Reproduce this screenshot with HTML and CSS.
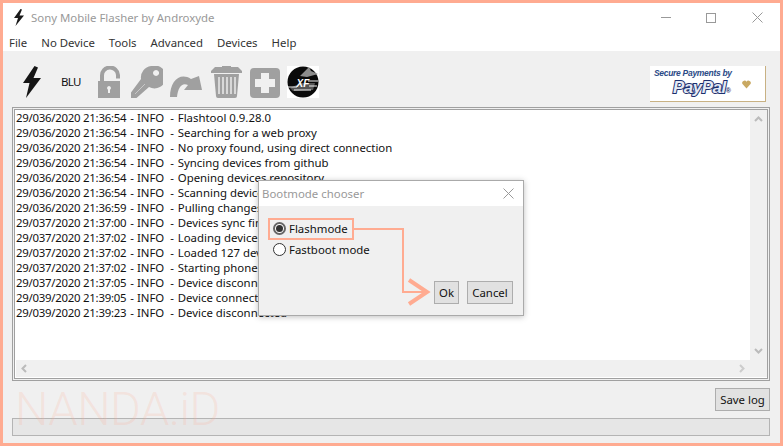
FILE: index.html
```html
<!DOCTYPE html>
<html lang="en">
<head>
<meta charset="utf-8">
<title>Sony Mobile Flasher by Androxyde</title>
<link rel="stylesheet" href="styles.css">
</head>
<body>
<div class="window">
  <header class="titlebar">
    <svg class="app-icon" width="12" height="17" viewBox="0 0 12 17"><path d="M7.500 0 L1 9 L5 9 L2.500 17 L11 6.500 L6.500 6.500 L9 0.500 Z" fill="#1a1a1a"/></svg>
    <span class="title">Sony Mobile Flasher by Androxyde</span>
    <div class="controls">
      <svg class="ctl-min" width="10" height="1" viewBox="0 0 10 1"><rect width="10" height="1" fill="#999"/></svg>
      <svg class="ctl-max" width="10" height="10" viewBox="0 0 10 10"><rect x=".5" y=".5" width="9" height="9" fill="none" stroke="#999"/></svg>
      <svg class="ctl-close" width="11" height="11" viewBox="0 0 11 11"><path d="M.5 .5 L10.500 10.500 M10.500 .5 L.5 10.500" stroke="#999" fill="none"/></svg>
    </div>
  </header>
  <nav class="menubar">
    <span>File</span><span>No Device</span><span>Tools</span><span>Advanced</span><span>Devices</span><span>Help</span>
  </nav>
  <main class="content">
    <div class="toolbar">
      <div class="tools">
        <svg class="tool bolt" width="20" height="32" viewBox="0 0 20 32"><path d="M12.500 0 L1 17 L7.500 17 L4 32 L19 12 L11.500 12 L16 1.500 Z" fill="#151515"/></svg>
        <span class="blu">BLU</span>
        <svg class="tool lock" width="22" height="32" viewBox="0 0 22 32"><path d="M4 15 V10 A8 8 0 0 1 20 9 V12.500" fill="none" stroke="#a0a0a0" stroke-width="4"/><path d="M0 15 H22 V32 H0 Z M11 20 a2 2 0 0 0 -1 3.700 V27 h2 V23.700 A2 2 0 0 0 11 20 Z" fill="#a0a0a0" fill-rule="evenodd"/></svg>
        <svg class="tool key" width="32" height="32" viewBox="0 0 32 32"><path d="M20 0 A11.500 11.500 0 1 1 18 21 L5.500 32 L0 32 L0 26.500 L10 13 A11.500 11.500 0 0 1 20 0 Z M25 4 a3 3 0 1 0 .1 0 Z" fill="#a0a0a0" fill-rule="evenodd"/><path d="M4 28 L14 18" stroke="#c8c8c8" fill="none"/></svg>
        <svg class="tool arrow" width="32" height="25" viewBox="0 0 32 25"><path d="M0 25 C0 9 10 0 21 7 L29 4 L32 18 L14 18 L18 13 C12 10 8 15 7 25 Z" fill="#a0a0a0"/></svg>
        <svg class="tool trash" width="31" height="32" viewBox="0 0 31 32"><path d="M4 1 L11 1 V0 H20 V1 L27 1 L31 5 V7 H0 V5 Z" fill="#a0a0a0"/><path d="M3 8 H28 L26 30 Q26 32 24 32 H7 Q5 32 5 30 Z" fill="#a0a0a0"/><path d="M7 11 H9 V28 H7 Z M11 11 H13 V28 H11 Z M15 11 H17 V28 H15 Z M19 11 H21 V28 H19 Z M23 11 H25 V28 H23 Z" fill="#d8d8d8"/></svg>
        <svg class="tool plus" width="30" height="30" viewBox="0 0 30 30"><path d="M4 0 H26 Q30 0 30 4 V26 Q30 30 26 30 H4 Q0 30 0 26 V4 Q0 0 4 0 Z M11 5 V11 H5 V19 H11 V25 H19 V19 H25 V11 H19 V5 Z" fill="#a0a0a0" fill-rule="evenodd"/></svg>
        <svg class="tool xf" width="32" height="32" viewBox="0 0 32 32"><rect width="32" height="32" fill="#fff"/><circle cx="16" cy="16" r="15.500" fill="#0a0a0a"/><path d="M13 10 L22 1 L24 5 L31 8 L20 11 Z" fill="#8c8c8c"/><path d="M3 22 L14 17 L28 17 L26 24 L6 25 Z" fill="#555"/><path d="M1 21 H10 M21 15 H31 M22 20 H30 M7 24 H24" stroke="#eee" stroke-width="1"/><text x="16" y="21" class="xf-text">XF</text></svg>
      </div>
      <div class="paypal">
        <span class="pp-secure">Secure Payments by</span>
        <span class="pp-row"><span class="pp-name">PayPal</span><span class="pp-reg">®</span>
          <svg class="pp-heart" width="9" height="9" viewBox="0 0 9 9"><path d="M4.500 8.500 L.5 4 A2.200 2.200 0 0 1 4.500 1.800 A2.200 2.200 0 0 1 8.500 4 Z" fill="#c9a962"/></svg>
        </span>
      </div>
    </div>
    <section class="logbox">
      <div class="loginner">
        <div class="logrow">
          <div class="log">
            <div class="line"><span class="ts">29/036/2020 21:36:54</span> <span class="lvl">- INFO  -</span> Flashtool 0.9.28.0</div>
            <div class="line"><span class="ts">29/036/2020 21:36:54</span> <span class="lvl">- INFO  -</span> Searching for a web proxy</div>
            <div class="line"><span class="ts">29/036/2020 21:36:54</span> <span class="lvl">- INFO  -</span> No proxy found, using direct connection</div>
            <div class="line"><span class="ts">29/036/2020 21:36:54</span> <span class="lvl">- INFO  -</span> Syncing devices from github</div>
            <div class="line"><span class="ts">29/036/2020 21:36:54</span> <span class="lvl">- INFO  -</span> Opening devices repository</div>
            <div class="line"><span class="ts">29/036/2020 21:36:54</span> <span class="lvl">- INFO  -</span> Scanning devices folder</div>
            <div class="line"><span class="ts">29/036/2020 21:36:59</span> <span class="lvl">- INFO  -</span> Pulling changes from github</div>
            <div class="line"><span class="ts">29/037/2020 21:37:00</span> <span class="lvl">- INFO  -</span> Devices sync finished</div>
            <div class="line"><span class="ts">29/037/2020 21:37:02</span> <span class="lvl">- INFO  -</span> Loading devices database</div>
            <div class="line"><span class="ts">29/037/2020 21:37:02</span> <span class="lvl">- INFO  -</span> Loaded 127 devices</div>
            <div class="line"><span class="ts">29/037/2020 21:37:02</span> <span class="lvl">- INFO  -</span> Starting phone detection</div>
            <div class="line"><span class="ts">29/037/2020 21:37:05</span> <span class="lvl">- INFO  -</span> Device disconnected</div>
            <div class="line"><span class="ts">29/039/2020 21:39:05</span> <span class="lvl">- INFO  -</span> Device connected</div>
            <div class="line"><span class="ts">29/039/2020 21:39:23</span> <span class="lvl">- INFO  -</span> Device disconnected</div>
          </div>
          <div class="vscroll">
            <svg width="9" height="6" viewBox="0 0 9 6"><path d="M1 5 L4.500 1.500 L8 5" fill="none" stroke="#bbb" stroke-width="2"/></svg>
            <svg width="9" height="6" viewBox="0 0 9 6"><path d="M1 1 L4.500 4.500 L8 1" fill="none" stroke="#bbb" stroke-width="2"/></svg>
          </div>
        </div>
        <div class="hscroll">
          <svg width="6" height="9" viewBox="0 0 6 9"><path d="M5 1 L1.500 4.500 L5 8" fill="none" stroke="#bbb" stroke-width="2"/></svg>
          <svg width="6" height="9" viewBox="0 0 6 9"><path d="M1 1 L4.500 4.500 L1 8" fill="none" stroke="#ccc" stroke-width="2"/></svg>
        </div>
      </div>
    </section>
    <div class="actions"><button class="btn save">Save log</button></div>
    <div class="progress"></div>
  </main>

  <div class="watermark">NANDA.iD</div>

  <div class="dialog">
    <div class="dlg-title">
      <span>Bootmode chooser</span>
      <svg width="11" height="11" viewBox="0 0 11 11"><path d="M.5 .5 L10.500 10.500 M10.500 .5 L.5 10.500" stroke="#999" fill="none"/></svg>
    </div>
    <div class="dlg-body">
      <label class="radio"><span class="dot on"></span>Flashmode</label>
      <label class="radio"><span class="dot"></span>Fastboot mode</label>
      <div class="dlg-actions">
        <button class="btn ok">Ok</button>
        <button class="btn cancel">Cancel</button>
      </div>
    </div>
  </div>

  <svg class="annotation" width="170" height="90" viewBox="0 0 170 90">
    <rect x="1" y="1" width="84" height="20" fill="none" stroke="#ffab91" stroke-width="2"/>
    <path d="M85 11 H135 V74 H158" fill="none" stroke="#ffab91" stroke-width="2"/>
    <path d="M141 62 L159 74 L141 86" fill="none" stroke="#ffab91" stroke-width="4"/>
  </svg>
</div>
</body>
</html>
```

FILE: styles.css
```css
* { box-sizing: border-box; }
html, body { margin: 0; height: 100%; }
body {
  width: 783px;
  height: 446px;
  overflow: hidden;
  font-family: "Noto Sans", "Open Sans", sans-serif;
  font-size: 11.4px;
  color: #111;
}
.window {
  position: relative;
  width: 783px;
  height: 446px;
  border: 3px solid #ffab91;
  display: flex;
  flex-direction: column;
  background: #f0f0f0;
}
.titlebar {
  height: 30px;
  background: #fff;
  display: flex;
  align-items: center;
  padding-left: 10px;
  flex: none;
}
.app-icon { margin-top: -2px; }
.title { margin-left: 6px; margin-top: -1px; color: #999; font-size: 11.4px; }
.controls {
  margin-left: auto;
  display: flex;
  align-items: center;
  padding-right: 17px;
  margin-top: -1px;
}
.ctl-max { margin-left: 35px; }
.ctl-close { margin-left: 36px; }
.menubar {
  height: 18px;
  background: #fff;
  display: flex;
  gap: 14px;
  padding-left: 6px;
  flex: none;
  color: #333;
  line-height: 19px;
}
.content {
  flex: 1;
  min-height: 0;
  display: flex;
  flex-direction: column;
  padding: 0 10px 0 9px;
}
.toolbar {
  height: 56px;
  display: flex;
  align-items: flex-start;
  justify-content: space-between;
  flex: none;
}
.tools { display: flex; align-items: flex-start; padding-top: 15px; }
.tool { display: block; flex: none; }
.bolt { margin-left: 10px; }
.blu { margin-left: 19px; margin-top: 8px; font-size: 11.5px; line-height: 16px; color: #111; letter-spacing: -.7px; width: 19px; white-space: nowrap; }
.lock { margin-left: 18px; }
.key { margin-left: 11px; }
.arrow { margin-left: 7px; margin-top: 6px; }
.trash { margin-left: 9px; }
.plus { margin-left: 8px; margin-top: 2px; }
.xf { margin-left: 7px; }
.xf-text { font-family: "Liberation Sans", sans-serif; font-size: 10px; font-style: italic; font-weight: 700; fill: #fff; text-anchor: middle; }
.paypal {
  width: 116px;
  height: 36px;
  margin-top: 15px;
  margin-right: 4px;
  background: #fff;
  border-right: 1px solid #c8b183;
  border-bottom: 1px solid #c8b183;
  padding: 3px 0 0 4px;
  display: flex;
  flex-direction: column;
  font-family: "Liberation Sans", sans-serif;
  line-height: 1;
}
.pp-secure { font-size: 8.500px; font-style: italic; font-weight: 700; color: #2b4a86; white-space: nowrap; letter-spacing: -.3px; }
.pp-row { display: flex; align-items: flex-end; padding-left: 19px; margin-top: 1px; }
.pp-name {
  font-size: 17px;
  font-style: italic;
  font-weight: 700;
  color: #e4e9f4;
  -webkit-text-stroke: 2px #1c2f6e;
  paint-order: stroke fill;
  letter-spacing: -.5px;
}
.pp-reg { font-size: 7px; font-weight: 700; color: #1c2f6e; margin-bottom: 2px; }
.pp-heart { margin-left: 11px; margin-bottom: 7px; flex: none; }
.logbox {
  height: 274px;
  border: 1px solid #a0a0a0;
  padding: 1px;
  flex: none;
}
.loginner {
  height: 100%;
  border: 1px solid #a0a0a0;
  background: #fff;
  display: flex;
  flex-direction: column;
  padding: 0 0 1px 0;
}
.logrow { flex: 1; min-height: 0; display: flex; padding-right: 0; }
.log {
  flex: 1;
  padding: 0 0 0 1px;
  overflow: hidden;
  color: #111;
}
.line { white-space: pre; line-height: 15px; height: 15px; }
.ts { letter-spacing: -.25px; margin-right: 1px; }
.lvl { margin-right: 1px; }
.vscroll {
  width: 17px;
  background: #f0f0f0;
  display: flex;
  flex-direction: column;
  justify-content: space-between;
  align-items: center;
  padding: 6px 0;
}
.hscroll {
  height: 17px;
  margin-left: 1px;
  background: #f0f0f0;
  display: flex;
  justify-content: space-between;
  align-items: center;
  padding: 0 22px 0 5px;
  flex: none;
}
.actions { display: flex; justify-content: flex-end; padding-top: 7px; height: 37px; flex: none; }
.btn {
  font: 11.4px "Noto Sans", "Open Sans", sans-serif;
  color: #111;
  background: #e1e1e1;
  border: 1px solid #adadad;
  padding: 0;
  height: 23px;
}
.save { width: 55px; }
.progress {
  height: 18px;
  background: #e6e6e6;
  border: 1px solid #b4b4b4;
  flex: none;
}
.watermark {
  position: absolute;
  left: 12px;
  top: 378px;
  font: 300 47px/56px "Roboto", "Noto Sans", sans-serif;
  letter-spacing: -.5px;
  color: rgba(255, 171, 145, .2);
  pointer-events: none;
}
.dialog {
  position: absolute;
  left: 255px;
  top: 177px;
  width: 266px;
  height: 136px;
  background: #f0f0f0;
  border: 1px solid #aaa;
  box-shadow: 0 1px 6px rgba(0, 0, 0, .25);
  display: flex;
  flex-direction: column;
}
.dlg-title {
  height: 25px;
  background: #fff;
  display: flex;
  align-items: center;
  justify-content: space-between;
  padding: 0 9px 0 3px;
  color: #999;
  flex: none;
}
.dlg-body {
  flex: 1;
  display: flex;
  flex-direction: column;
  padding: 12px 10px 11px 14px;
}
.radio { display: flex; align-items: center; height: 21px; gap: 3px; }
.dot {
  width: 13px;
  height: 13px;
  border-radius: 50%;
  border: 1px solid #333;
  background: #fff;
  position: relative;
}
.dot.on { border: 2px solid #666; }
.dot.on::after {
  content: "";
  position: absolute;
  inset: 1px;
  border-radius: 50%;
  background: #333;
}
.dlg-actions { margin-top: auto; display: flex; justify-content: flex-end; gap: 8px; }
.ok { width: 25px; }
.cancel { width: 46px; }
.annotation { position: absolute; left: 265px; top: 215px; pointer-events: none; }
```
